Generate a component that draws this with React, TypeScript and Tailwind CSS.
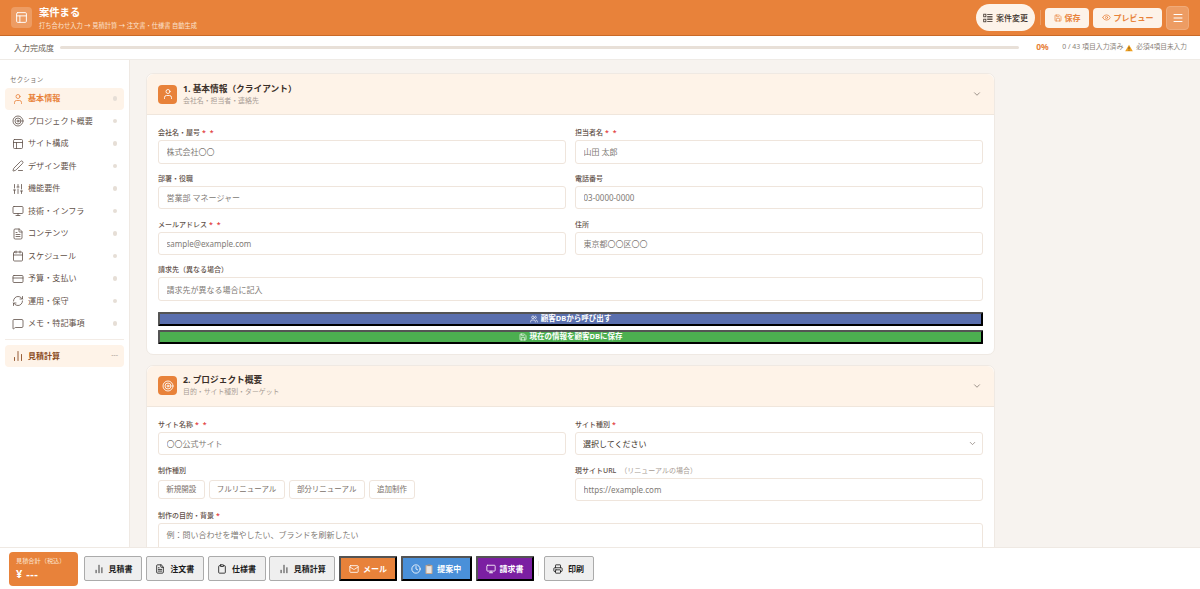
import React from "react";
import {
  User, Target, Layout, PenLine, SlidersVertical, Monitor, FileText, Calendar, CreditCard,
  RefreshCw, MessageSquare, ChartNoAxesColumn, Save, Users, Mail, Clock, Printer, Clipboard,
  Eye, Menu, ChevronDown,
} from "lucide-react";

const font = { fontFamily: '"Noto Sans", "Noto Sans CJK JP", sans-serif' };

const navItems = [
  { label: "基本情報", icon: User, active: true },
  { label: "プロジェクト概要", icon: Target },
  { label: "サイト構成", icon: Layout },
  { label: "デザイン要件", icon: PenLine },
  { label: "機能要件", icon: SlidersVertical },
  { label: "技術・インフラ", icon: Monitor },
  { label: "コンテンツ", icon: FileText },
  { label: "スケジュール", icon: Calendar },
  { label: "予算・支払い", icon: CreditCard },
  { label: "運用・保守", icon: RefreshCw },
  { label: "メモ・特記事項", icon: MessageSquare },
];

function Field({ label, req, note, placeholder }: { label: string; req?: number; note?: string; placeholder: string }) {
  return (
    <div>
      <label className="flex h-[9px] items-center text-[7px] font-medium leading-none text-[#5f5149]">
        {label}
        {req === 2 && <span className="ml-[2px] text-[#e03131]">*</span>}
        {req ? <span className="ml-[4px] text-[#e03131]">*</span> : null}
        {note && <span className="ml-[4px] font-normal text-[#a89c94]">{note}</span>}
      </label>
      <input
        placeholder={placeholder}
        className="mt-[3px] block h-[23.5px] w-full rounded-[3px] border border-[#efe5dc] bg-white px-[7.5px] text-[8px] outline-none placeholder:text-[#807a75]"
      />
    </div>
  );
}

function CardHeader({ icon: Icon, title, sub }: { icon: React.ElementType; title: string; sub: string }) {
  return (
    <div className="flex h-[41px] items-center gap-[6px] rounded-t-[7px] border-b border-[#f0e6dc] bg-[#fef3e8] pl-[11px] pr-[12px]">
      <div className="flex h-[19px] w-[19px] items-center justify-center rounded-[4px] bg-[#e8823a] text-white">
        <Icon size={12} strokeWidth={1.75} />
      </div>
      <div className="flex-1">
        <div className="text-[8.7px] font-bold leading-[12px] text-[#3a2f28]">{title}</div>
        <div className="mt-[1px] text-[6.9px] leading-[10px] text-[#a89c94]">{sub}</div>
      </div>
      <ChevronDown size={10} className="text-[#8a7f78]" />
    </div>
  );
}

function DocButton({ icon: Icon, label, w }: { icon: React.ElementType; label: string; w: string }) {
  return (
    <button className={`flex h-[25px] items-center justify-center gap-[5px] rounded-[2px] border-[1.5px] border-[#ababab] bg-[#efefef] text-[8px] font-bold text-[#1a1a1a] ${w}`}>
      <Icon size={10} strokeWidth={2} />
      {label}
    </button>
  );
}

export default function App() {
  return (
    <div style={font} className="flex h-[589px] w-[1200px] flex-col overflow-hidden bg-[#f7f3ef]">
      {/* Header */}
      <header className="flex h-[36px] shrink-0 items-center border-b border-[#c96a28] bg-[#e8823a] pl-[11px] pr-[11px]">
        <div className="flex h-[21px] w-[21px] items-center justify-center rounded-[4px] bg-[#ed9c63] text-white">
          <Layout size={13} strokeWidth={1.75} />
        </div>
        <div className="ml-[7px] flex-1">
          <div className="text-[10.3px] font-bold leading-[12px] text-white">案件まる</div>
          <div className="mt-[3px] text-[6.25px] leading-[9px] text-[#fbe3d0]">打ち合わせ入力 → 見積計算 → 注文書・仕様書 自動生成</div>
        </div>
        <button className="flex h-[27px] w-[59px] items-center justify-center gap-[3px] rounded-full bg-[#fdf3e9] text-[8px] font-medium text-[#3a2f28]">
          <svg width="10" height="10" viewBox="0 0 10 10" fill="none" stroke="currentColor" strokeWidth="0.8">
            <rect x="0.7" y="1.2" width="2.2" height="2.6" />
            <rect x="0.7" y="6.2" width="2.2" height="2.6" />
            <path d="M4.2 1.5h5.3M4.2 3.5h5.3M4.2 5h5.3M4.2 6.5h5.3M4.2 8.5h5.3" />
          </svg>
          案件変更
        </button>
        <div className="mx-[4.5px] h-[15px] w-px bg-[#ed9c63]" />
        <button className="flex h-[20px] w-[44px] items-center justify-center gap-[3px] rounded-[4px] bg-[#fdf3e9] text-[8px] font-bold text-[#e8823a]">
          <Save size={8} />
          保存
        </button>
        <button className="ml-[4px] flex h-[20px] w-[69px] items-center justify-center gap-[3px] rounded-[4px] bg-[#fdf3e9] text-[8px] font-bold text-[#e8823a]">
          <Eye size={9} />
          プレビュー
        </button>
        <button className="ml-[4px] flex h-[24px] w-[23px] items-center justify-center rounded-[4px] border border-[#f0ab7a] bg-[#ed9c63] text-white">
          <Menu size={12} />
        </button>
      </header>

      {/* Progress */}
      <div className="flex h-[24px] shrink-0 items-center border-b border-[#efebe6] bg-white pl-[14px] pr-[13px]">
        <span className="w-[46px] text-[8px] text-[#6b5f57]">入力完成度</span>
        <div className="h-[3px] flex-1 rounded-full bg-[#e8e0d8]" />
        <span className="ml-[17px] w-[26px] text-[8.5px] font-bold text-[#e8823a]">0%</span>
        <span className="text-[6.9px] text-[#8a7f78]">0 / 43 項目入力済み</span>
        <svg width="8" height="8" viewBox="0 0 10 10" className="ml-[2px]">
          <path d="M5 .8 9.8 9.2H.2Z" fill="#f0a020" />
          <path d="M5 3.6v3M5 7.4v.9" stroke="#4a3a20" strokeWidth="0.9" />
        </svg>
        <span className="ml-[3px] text-[6.7px] text-[#8a7f78]">必須4項目未入力</span>
      </div>

      <div className="flex min-h-0 flex-1">
        {/* Sidebar */}
        <aside className="w-[130px] shrink-0 border-r border-[#efe9e3] bg-white px-[5px] pt-[15.5px]">
          <div className="pl-[5px] text-[6.5px] leading-[8px] tracking-wide text-[#7a6f68]">セクション</div>
          <nav className="mt-[4px] flex flex-col gap-[0.5px]">
            {navItems.map(({ label, icon: Icon, active }) => (
              <div
                key={label}
                className={`flex h-[22px] items-center rounded-[4px] pl-[7px] pr-[7px] ${active ? "bg-[#fef3e8] text-[#e8823a]" : "text-[#5f5149]"}`}
              >
                <Icon size={12} strokeWidth={1.6} />
                <span className={`ml-[4px] flex-1 text-[8.1px] ${active ? "font-bold" : ""}`}>{label}</span>
                <span className="h-[4.5px] w-[4.5px] rounded-full bg-[#e6ded6]" />
              </div>
            ))}
          </nav>
          <div className="mt-[4.5px] h-px bg-[#f3ece6]" />
          <div className="mt-[4.5px] flex h-[22px] items-center rounded-[4px] bg-[#fef3e8] pl-[7px] pr-[6px] text-[#8a4a20]">
            <ChartNoAxesColumn size={12} strokeWidth={1.75} />
            <span className="ml-[4px] flex-1 text-[8px] font-bold">見積計算</span>
            <span className="text-[7px] text-[#a89c94]">---</span>
          </div>
        </aside>

        {/* Main */}
        <main className="min-w-0 flex-1 overflow-hidden pl-[16px] pt-[13px]">
          <div className="flex w-[849px] flex-col gap-[10px]">
            <section className="rounded-[7px] border border-[#efe9e3] bg-white">
              <CardHeader icon={User} title="1. 基本情報（クライアント）" sub="会社名・担当者・連絡先" />
              <div className="px-[11px] pb-[10px] pt-[13px]">
                <div className="grid grid-cols-2 gap-x-[9px] gap-y-[10.3px]">
                  <Field label="会社名・屋号" req={2} placeholder="株式会社〇〇" />
                  <Field label="担当者名" req={2} placeholder="山田 太郎" />
                  <Field label="部署・役職" placeholder="営業部 マネージャー" />
                  <Field label="電話番号" placeholder="03-0000-0000" />
                  <Field label="メールアドレス" req={2} placeholder="sample@example.com" />
                  <Field label="住所" placeholder="東京都〇〇区〇〇" />
                  <div className="col-span-2">
                    <Field label="請求先（異なる場合）" placeholder="請求先が異なる場合に記入" />
                  </div>
                </div>
                <button className="mt-[11px] flex h-[14px] w-full items-center justify-center gap-[3px] rounded-[1px] border-2 border-black [border-style:outset] bg-[#5a6fae] text-[7.5px] font-bold text-white">
                  <Users size={8} />
                  顧客DBから呼び出す
                </button>
                <button className="mt-[4px] flex h-[14px] w-full items-center justify-center gap-[3px] rounded-[1px] border-2 border-black [border-style:outset] bg-[#4caf50] text-[7.5px] font-bold text-white">
                  <Save size={8} />
                  現在の情報を顧客DBに保存
                </button>
              </div>
            </section>

            <section className="rounded-[7px] border border-[#efe9e3] bg-white">
              <CardHeader icon={Target} title="2. プロジェクト概要" sub="目的・サイト種別・ターゲット" />
              <div className="px-[11px] pt-[13px]">
                <div className="grid grid-cols-2 gap-x-[9px] gap-y-[10.3px]">
                  <Field label="サイト名称" req={2} placeholder="〇〇公式サイト" />
                  <div>
                    <label className="flex h-[9px] items-center text-[7px] font-medium leading-none text-[#5f5149]">
                      サイト種別<span className="ml-[2px] text-[#e03131]">*</span>
                    </label>
                    <div className="relative mt-[3px]">
                      <select className="block h-[23.5px] w-full appearance-none rounded-[3px] border border-[#efe5dc] bg-white px-[7px] text-[8px] text-[#3a2f28] outline-none">
                        <option>選択してください</option>
                      </select>
                      <ChevronDown size={9} className="absolute right-[6px] top-[7px] text-[#8a7f78]" />
                    </div>
                  </div>
                  <div>
                    <label className="flex h-[9px] items-center text-[7px] font-medium leading-none text-[#5f5149]">制作種別</label>
                    <div className="mt-[5px] flex gap-[4px]">
                      {["新規開設", "フルリニューアル", "部分リニューアル", "追加制作"].map((t) => (
                        <span key={t} className="flex h-[19px] items-center rounded-[3px] border border-[#efe5dc] px-[7.25px] text-[7.5px] text-[#7a6f68]">{t}</span>
                      ))}
                    </div>
                  </div>
                  <Field label="現サイトURL" note="（リニューアルの場合）" placeholder="https://example.com" />
                  <div className="col-span-2">
                    <label className="flex h-[9px] items-center text-[7px] font-medium leading-none text-[#5f5149]">
                      制作の目的・背景<span className="ml-[2px] text-[#e03131]">*</span>
                    </label>
                    <textarea
                      placeholder="例：問い合わせを増やしたい、ブランドを刷新したい"
                      className="mt-[3px] block h-[60px] w-full resize-none rounded-[3px] border border-[#efe5dc] bg-white px-[7.5px] py-[5px] text-[8px] outline-none placeholder:text-[#807a75]"
                    />
                  </div>
                </div>
              </div>
            </section>
          </div>
        </main>
      </div>

      {/* Footer */}
      <footer className="flex h-[42px] shrink-0 items-center border-t border-[#efe9e3] bg-white pl-[9px]">
        <div className="flex h-[34px] w-[69px] flex-col justify-center rounded-[4px] bg-[#e8823a] pl-[7px] text-white">
          <span className="text-[6.2px] leading-[8px] text-[#fbe3d0]">見積合計（税込）</span>
          <span className="mt-[2px] text-[11px] font-bold leading-[13px] tracking-[0.5px]">¥ ---</span>
        </div>
        <div className="ml-[6px] flex items-center gap-[3.75px]">
          <DocButton icon={ChartNoAxesColumn} label="見積書" w="w-[58px]" />
          <DocButton icon={FileText} label="注文書" w="w-[58px]" />
          <DocButton icon={Clipboard} label="仕様書" w="w-[58px]" />
          <DocButton icon={ChartNoAxesColumn} label="見積計算" w="w-[66px]" />
          <button className="flex h-[25px] w-[58px] items-center justify-center gap-[4px] rounded-[1px] border-2 border-black [border-style:outset] bg-[#e8823a] text-[8px] font-bold text-white">
            <Mail size={10} />
            メール
          </button>
          <button className="flex h-[25px] w-[71px] items-center justify-center gap-[4px] rounded-[1px] border-2 border-black [border-style:outset] bg-[#4a90d9] text-[8px] font-bold text-white">
            <Clock size={10} />
            <svg width="8" height="10" viewBox="0 0 8 10">
              <rect x="0.5" y="1" width="7" height="9" rx="0.8" fill="#c9a78c" />
              <rect x="1.5" y="2.2" width="5" height="6.8" fill="#e8e4e0" />
              <rect x="2.5" y="0.2" width="3" height="1.8" fill="#8f8f8f" />
            </svg>
            提案中
          </button>
          <button className="flex h-[25px] w-[58px] items-center justify-center gap-[4px] rounded-[1px] border-2 border-black [border-style:outset] bg-[#7b1fa2] text-[8px] font-bold text-white">
            <Monitor size={10} />
            請求書
          </button>
        </div>
        <div className="ml-[4.5px] mr-[4.5px] h-[15px] w-px bg-[#efe9e3]" />
        <DocButton icon={Printer} label="印刷" w="w-[50px]" />
      </footer>
    </div>
  );
}
